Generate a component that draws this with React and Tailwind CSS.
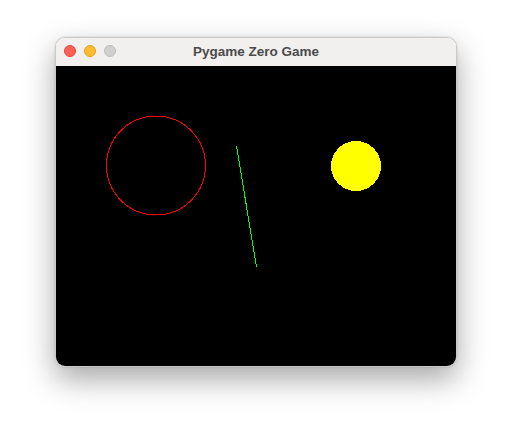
export default function App() {
  return (
    <div className="w-[512px] h-[440px] bg-white pt-[38px] pl-[56px]">
      <div className="w-[400px] rounded-[10px] overflow-hidden border border-[#c9c9c9] shadow-[0_12px_30px_rgba(0,0,0,0.35),0_0_2px_rgba(0,0,0,0.2)] -ml-px -mt-px box-content">
        <div className="relative h-[28px] bg-[#f1f0ef] flex items-center justify-center">
          <div className="absolute left-[8px] top-[7px] flex gap-[8px]">
            <div className="w-[12px] h-[12px] rounded-full bg-[#fe5f57] border border-[#e0443e]" />
            <div className="w-[12px] h-[12px] rounded-full bg-[#febc2e] border border-[#dea123]" />
            <div className="w-[12px] h-[12px] rounded-full bg-[#d1d0cf] border border-[#bebdbc]" />
          </div>
          <span className="text-[13.5px] font-bold text-[#4a4a4a] leading-none" style={{ fontFamily: '"Liberation Sans", Arial, sans-serif' }}>
            Pygame Zero Game
          </span>
        </div>
        <svg width="400" height="300" className="block bg-black" shapeRendering="crispEdges">
          <circle cx="100" cy="99.5" r="49.5" fill="none" stroke="#ff0000" strokeWidth="1" />
          <line x1="180.5" y1="80" x2="200.5" y2="201" stroke="#00ff00" strokeWidth="1" />
          <circle cx="300" cy="100" r="25" fill="#ffff00" />
        </svg>
      </div>
    </div>
  );
}
